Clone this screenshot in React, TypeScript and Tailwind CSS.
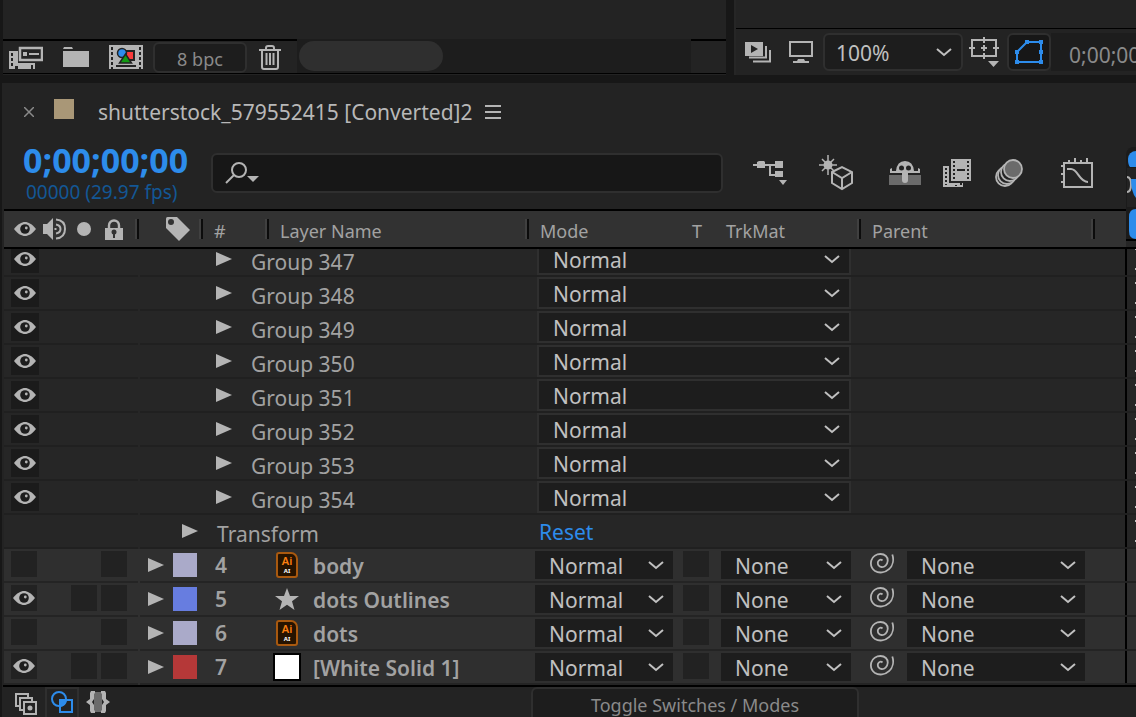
import type { ReactNode } from "react";
import clsx from "clsx";

type Layer = {
  id: number;
  name: string;
  color: string;
  kind: "ai" | "shape" | "solid";
  visible: boolean;
  solo: boolean;
};

const groups = [347, 348, 349, 350, 351, 352, 353, 354];

const layers: Layer[] = [
  { id: 4, name: "body", color: "bg-[#aaaac9]", kind: "ai", visible: false, solo: false },
  { id: 5, name: "dots Outlines", color: "bg-[#677de0]", kind: "shape", visible: true, solo: true },
  { id: 6, name: "dots", color: "bg-[#aaaac9]", kind: "ai", visible: false, solo: false },
  { id: 7, name: "[White Solid 1]", color: "bg-[#b53838]", kind: "solid", visible: true, solo: true },
];

function EyeIcon() {
  return (
    <svg width="22" height="14" viewBox="0 0 22 14" fill="none">
      <path d="M0 7C4 2 7.500 0 11 0s7 2 11 7c-4 5-7.500 7-11 7S4 12 0 7z" fill="#b4b4b4" />
      <circle cx="11" cy="7" r="4.800" fill="#1d1d1d" />
      <circle cx="12.300" cy="6" r="1.400" fill="#b4b4b4" />
    </svg>
  );
}

function SpeakerIcon() {
  return (
    <svg width="24" height="22" viewBox="0 0 24 22" fill="none" stroke="#b4b4b4" strokeWidth="2">
      <path d="M0 6h4l6-6v22l-6-6H0z" fill="#b4b4b4" stroke="none" />
      <path d="M13 6.500c3 .5 4.500 2 4.500 4.500s-1.500 4-4.500 4.500M13 1.500c6 .5 9 4 9 9.500s-3 9-9 9.500M12.500 10v2" />
    </svg>
  );
}

function LockIcon() {
  return (
    <svg width="18" height="21" viewBox="0 0 18 21" fill="none">
      <path d="M4 10V6.500a5 5 0 0 1 10 0V10" stroke="#b4b4b4" strokeWidth="2.400" />
      <path d="M0 9h18v12H0z" fill="#b4b4b4" />
      <circle cx="9" cy="13" r="2.500" fill="#323232" />
      <path d="M8 14h2v5H8z" fill="#323232" />
    </svg>
  );
}

function TagIcon() {
  return (
    <svg width="24" height="24" viewBox="0 0 24 24">
      <path d="M0 1.500Q0 0 1.500 0H11l13 13L13 24 0 11z" fill="#b4b4b4" />
      <circle cx="5" cy="5" r="3" fill="#323232" />
    </svg>
  );
}

function Triangle() {
  return (
    <svg className="shrink-0" width="16" height="14" viewBox="0 0 16 14">
      <path d="M0 0l16 7-16 7z" fill="#b4b4b4" />
    </svg>
  );
}

function Chevron() {
  return (
    <svg width="16" height="9" viewBox="0 0 16 9" fill="none" stroke="#c0c0c0" strokeWidth="2">
      <path d="M1 1l7 6 7-6" />
    </svg>
  );
}

function Spiral() {
  return (
    <svg width="24" height="21" viewBox="0 0 24 21" fill="none" stroke="#b4b4b4" strokeWidth="1.800">
      <path d="M22.300 1.500C24 6.500 23 12.500 19 16.200S9 20.500 5 18C1.500 15.500.3 11.500 1.300 7.500 2.500 3.500 6.500 1 10.500 1 15 1 18 4 17.700 8c-.3 3.800-3.200 6.300-6.200 6-2.700-.3-4.200-2.800-3.500-5.300C8.700 6.700 11 6 12.500 7.500" />
    </svg>
  );
}

function AiIcon() {
  return (
    <div className="flex h-[26px] w-[22px] flex-col items-center rounded-[3px] rounded-tr-[7px] border-2 border-[#a9590f] bg-[#261300]">
      <span className="text-[11px] leading-[14px] font-semibold text-[#f97f10]">Ai</span>
      <span className="text-[6px] leading-[7px] font-bold text-white">AI</span>
    </div>
  );
}

function LayerKindIcon({ kind }: { kind: Layer["kind"] }) {
  if (kind === "ai") return <AiIcon />;
  if (kind === "solid") return <div className="size-7 border-2 border-black bg-white" />;
  return (
    <svg width="24" height="22" viewBox="0 0 24 22">
      <path d="M12 0l3 8h9l-7 5.200L19.500 22 12 16.800 4.500 22 7 13.200 0 8h9z" fill="#b4b4b4" />
    </svg>
  );
}

function Dropdown({ label, value, className }: { label: string; value: string; className: string }) {
  return (
    <div className={clsx("relative bg-[#1d1d1d]", className)}>
      <select
        aria-label={label}
        className="h-full w-full appearance-none bg-transparent pt-px pl-[14px] text-[21px] leading-7 text-[#c0c0c0] outline-none"
      >
        <option>{value}</option>
      </select>
      <span className="pointer-events-none absolute inset-y-0 right-[9px] flex items-center">
        <Chevron />
      </span>
    </div>
  );
}

function Switch({ label, children }: { label: string; children?: ReactNode }) {
  return (
    <button type="button" aria-label={label} className="flex size-[26px] items-center justify-center bg-[#222222]">
      {children}
    </button>
  );
}

function HeadText({ children }: { children: ReactNode }) {
  return <span className="pt-1 whitespace-nowrap">{children}</span>;
}

function Divider() {
  return <span className="ml-auto h-5 w-1 shrink-0 border-r-2 border-l-2 border-r-[#0c0c0c] border-l-[#404040]" />;
}

function StripCell({ marks }: { marks?: boolean }) {
  return (
    <td className="w-[11px] border-b-2 border-[#202020]">
      <div className="flex h-8 flex-col items-end justify-between border-l-2 border-black py-[5px]">
        {marks && <i className="h-[2px] w-px bg-[#c0c0c0]" />}
        {marks && <i className="h-[2px] w-px bg-[#c0c0c0]" />}
      </div>
    </td>
  );
}

function GroupRow({ id }: { id: number }) {
  return (
    <tr className="flex h-[34px] shrink-0 bg-[#262626]">
      <td className="mr-[2px] flex w-[134px] border-b-2 border-[#202020] pt-[2px] pl-[7px]">
        <button type="button" aria-label={`Toggle Group ${id}`} className="flex size-7 items-center justify-center bg-[#1b1b1b]">
          <EyeIcon />
        </button>
      </td>
      <td className="flex min-w-0 flex-1 items-center gap-[19px] border-b-2 border-[#202020] pl-[76px]">
        <Triangle />
        <span className="pt-[6px] text-[21px] leading-7 text-[#a2a2a2]">Group {id}</span>
      </td>
      <td className="w-[332px] border-b-2 border-[#202020] pl-2">
        <Dropdown label={`Mode of Group ${id}`} value="Normal" className="h-8 w-[314px] border-2 border-[#2f2f2f]" />
      </td>
      <td className="w-[264px] border-b-2 border-[#202020]" />
      <StripCell marks />
    </tr>
  );
}

function LayerRow({ layer }: { layer: Layer }) {
  return (
    <tr className="flex h-[34px] shrink-0 bg-[#2f2f2f]">
      <td className="mr-[2px] flex w-[134px] border-b-2 border-[#242424] pt-[2px] pl-[7px]">
        <Switch label="Visible">{layer.visible && <EyeIcon />}</Switch>
        <span className="ml-[34px] flex w-[26px]">{layer.solo && <Switch label="Solo" />}</span>
        <span className="ml-1">
          <Switch label="Lock" />
        </span>
      </td>
      <td className="flex min-w-0 flex-1 items-center border-b-2 border-[#242424] pl-2 text-[21px] leading-7 font-semibold text-[#a2a2a2]">
        <Triangle />
        <span className={clsx("ml-[9px] size-6 shrink-0", layer.color)} />
        <span className="w-[52px] pl-[18px]">{layer.id}</span>
        <span className="ml-[22px] flex w-[32px] justify-center">
          <LayerKindIcon kind={layer.kind} />
        </span>
        <span className="ml-[10px] pt-[2px] whitespace-nowrap">{layer.name}</span>
      </td>
      <td className="w-[152px] border-b-2 border-[#242424] pt-[2px] pl-[6px]">
        <Dropdown label="Mode" value="Normal" className="h-7 w-[138px]" />
      </td>
      <td className="w-[34px] border-b-2 border-[#242424] pt-[2px] pl-[2px]">
        <Switch label="Preserve transparency" />
      </td>
      <td className="w-[146px] border-b-2 border-[#242424] pt-[2px] pl-[6px]">
        <Dropdown label="Track matte" value="None" className="h-7 w-[130px]" />
      </td>
      <td className="flex w-[264px] gap-[13px] border-b-2 border-[#242424] pt-[2px] pl-[9px]">
        <span className="pt-[2px]">
          <Spiral />
        </span>
        <Dropdown label="Parent" value="None" className="h-7 w-[178px]" />
      </td>
      <StripCell />
    </tr>
  );
}

function ProjectPanel() {
  return (
    <section className="flex min-w-0 flex-[723] flex-col bg-[#232323]">
      <div className="flex-1" />
      <div className="mb-px flex h-[35px] border-b border-black">
        <div className="flex w-[294px] items-center border-t-2 border-black pl-[6px]">
          <button type="button" aria-label="Interpret footage">
            <svg width="34" height="24" viewBox="0 0 34 24" fill="none">
              <path d="M0 6h9v12h17v6H0z" fill="#b4b4b4" />
              <path d="M2 8h2v3H2zM2 13h2v3H2zM2 18h2v3H2zM6 21h3v3H6zM22 20h2v4h-2z" fill="#232323" />
              <path d="M11 3h22v12H11z" fill="#232323" stroke="#b4b4b4" strokeWidth="2.500" />
              <path d="M14 7h4v4h-4zM20 8h10v2H20z" fill="#b4b4b4" />
            </svg>
          </button>
          <button type="button" aria-label="New folder" className="ml-5">
            <svg width="26" height="20" viewBox="0 0 26 20" fill="#b4b4b4">
              <path d="M0 2l1-2h8l1 2zM0 4h26v16H0z" />
            </svg>
          </button>
          <button type="button" aria-label="New composition" className="ml-5">
            <svg width="34" height="24" viewBox="0 0 34 24">
              <path d="M0 0h34v24H0z" fill="#b4b4b4" />
              <path d="M2 2h2v3H2zM2 7h2v3H2zM2 12h2v3H2zM2 17h2v3H2zM30 2h2v3h-2zM30 7h2v3h-2zM30 12h2v3h-2zM30 17h2v3h-2zM7 20h20v2H7zM2 22h2v2H2zM30 22h2v2h-2z" fill="#232323" />
              <path d="M17 6h8v9h-8z" fill="#f93a3a" stroke="#232323" strokeWidth="2" />
              <circle cx="13" cy="8" r="4.500" fill="#2d8ceb" stroke="#232323" strokeWidth="1.500" />
              <path d="M16.500 9l6 9h-12z" fill="#139b13" stroke="#232323" strokeWidth="1.500" />
            </svg>
          </button>
          <button
            type="button"
            className="ml-[10px] flex h-[31px] w-[94px] items-center justify-center rounded-md border-2 border-[#2f2f2f] bg-[#1d1d1d] pt-1 text-[18px] leading-6 text-[#8a8a8a]"
          >
            8 bpc
          </button>
          <button type="button" aria-label="Delete" className="ml-3">
            <svg width="22" height="25" viewBox="0 0 22 25" fill="none" stroke="#b4b4b4" strokeWidth="2">
              <path d="M0 5h22M7 5V3q0-2 2-2h4q2 0 2 2v2M3 5v17q0 2 2 2h12q2 0 2-2V5M7.500 8v12M11 8v12M14.500 8v12" />
            </svg>
          </button>
        </div>
        <div className="flex-1 bg-[#1d1d1d] pt-[2px] pl-[2px]">
          <div className="h-[30px] w-36 rounded-full bg-[#2f2f2f]" />
        </div>
        <div className="w-[35px] border-t-2 border-black" />
      </div>
    </section>
  );
}

function ViewerPanel() {
  return (
    <section className="flex min-w-0 flex-[400] flex-col overflow-hidden border-l-2 border-[#262626] bg-[#232323]">
      <div className="flex-1" />
      <div className="flex h-[47px] items-center border-t border-black pl-[9px]">
        <button type="button" aria-label="Preview">
          <svg width="26" height="21" viewBox="0 0 26 21">
            <path d="M0 0h18v14H0z" fill="#b4b4b4" />
            <path d="M6 3l7 4-7 4z" fill="#232323" />
            <path d="M4 15.500h17V4M8 19.500h17V8" fill="none" stroke="#b4b4b4" strokeWidth="2" />
          </svg>
        </button>
        <button type="button" aria-label="Display" className="ml-[18px]">
          <svg width="24" height="22" viewBox="0 0 24 22" fill="none">
            <path d="M1 1h22v14H1z" stroke="#b4b4b4" strokeWidth="2" />
            <path d="M9 18h6l1 2h4v2H4v-2h4z" fill="#b4b4b4" />
          </svg>
        </button>
        <div className="relative ml-[10px] h-[38px] w-[140px] rounded-md border-2 border-[#2f2f2f] bg-[#1d1d1d]">
          <select
            aria-label="Magnification"
            className="h-full w-full appearance-none bg-transparent pt-[2px] pl-[11px] text-[21px] leading-7 text-[#c0c0c0] outline-none"
          >
            <option>100%</option>
          </select>
          <span className="pointer-events-none absolute inset-y-0 right-[9px] flex items-center">
            <Chevron />
          </span>
        </div>
        <button type="button" aria-label="Grid and guides" className="ml-[6px]">
          <svg width="30" height="30" viewBox="0 0 30 30" fill="none" stroke="#b4b4b4" strokeWidth="2">
            <path d="M3 3h24v16H3zM15 0v6M15 16v6M0 11h6M24 11h6M15 8v6M12 11h6" />
            <path d="M19 24h11l-5.500 6z" fill="#b4b4b4" stroke="none" />
          </svg>
        </button>
        <button
          type="button"
          aria-label="Mask visibility"
          className="ml-2 flex h-[38px] w-[44px] shrink-0 items-center justify-center rounded-md border-2 border-[#2f2f2f] bg-[#171717]"
        >
          <svg width="28" height="24" viewBox="0 0 28 24">
            <path d="M2 22h24V2H12L2 12z" fill="none" stroke="#2d8ceb" strokeWidth="2" />
            <path d="M0 20h4v4H0zM24 20h4v4h-4zM24 0h4v4h-4zM10 0h4v4h-4zM0 10h4v4H0zM24 10h4v4h-4z" fill="#2d8ceb" />
          </svg>
        </button>
        <div className="h-[38px] flex-1 overflow-hidden bg-[#1d1d1d] pt-1 pl-[18px] text-[21px] leading-9 whitespace-nowrap text-[#8a8a8a]">
          0;00;00;00
        </div>
      </div>
    </section>
  );
}

function TimelineTools() {
  return (
    <div className="flex shrink-0 items-center pr-[43px] pl-[30px]">
      <button type="button" aria-label="Flowchart">
        <svg width="34" height="25" viewBox="0 0 34 25" fill="#b4b4b4">
          <path d="M0 3h30v2H0zM16 4h2v11h-2zM17 13h6v2h-6z" />
          <path d="M4 1l2-1h5l1 1v6H4zM22 0h8v7h-8zM22 10h8v6h-8zM26 19h8l-4 5z" />
        </svg>
      </button>
      <button type="button" aria-label="Draft 3D" className="ml-8">
        <svg width="35" height="36" viewBox="0 0 35 36" fill="none" stroke="#b4b4b4" strokeWidth="2">
          <path d="M13 17l10-5 10 5v11l-10 6-10-6zM13 17l10 6 10-6M23 23v11" />
          <path d="M9 0v20M0 10h18M3 4l12 12M3 16L15 4" strokeWidth="1.500" />
          <circle cx="9" cy="10" r="4.500" fill="#b4b4b4" stroke="none" />
        </svg>
      </button>
      <button type="button" aria-label="Hide shy layers" className="ml-[35px]">
        <svg width="32" height="26" viewBox="0 0 32 26">
          <path d="M0 15h32v10H0z" fill="#6b6b6b" />
          <path d="M3 8v3h4Q8 1 16 1t9 10h4V8l2 1v4H1V9z" fill="#b4b4b4" />
          <path d="M13 11h6v9q0 3-3 3t-3-3z" fill="#b4b4b4" />
          <circle cx="12.500" cy="8" r="2.500" fill="#232323" />
          <circle cx="19.500" cy="8" r="2.500" fill="#232323" />
        </svg>
      </button>
      <button type="button" aria-label="Frame blending" className="ml-[22px]">
        <svg width="28" height="28" viewBox="0 0 28 28">
          <path d="M0 7h6v17h14v4H0z" fill="#b4b4b4" />
          <path d="M8 0h20v22H8z" fill="#b4b4b4" />
          <g stroke="#232323" strokeWidth="2" strokeDasharray="2 2">
            <path d="M11 2v20M25 2v20M3 9v17" />
          </g>
          <path d="M14 10h8v2h-8zM17 24h2v2h-2zM12 26h2v1h-2z" fill="#232323" />
        </svg>
      </button>
      <button type="button" aria-label="Motion blur" className="ml-6">
        <svg width="28" height="28" viewBox="0 0 28 28" stroke="#b4b4b4" strokeWidth="1.800">
          <circle cx="10" cy="18" r="9" fill="#232323" />
          <circle cx="12" cy="16" r="9" fill="#232323" />
          <circle cx="15" cy="13" r="9" fill="#232323" />
          <circle cx="18" cy="10" r="9" fill="#6b6b6b" />
        </svg>
      </button>
      <button type="button" aria-label="Graph editor" className="ml-[38px]">
        <svg width="32" height="31" viewBox="0 0 32 31" fill="none" stroke="#b4b4b4" strokeWidth="2">
          <path d="M3 5h28v24H3zM8 2v3M14 0v5M20 2v3M26 0v5M0 8h3M0 16h3M0 24h3" />
          <path d="M6 11h4c7 0 8 13 17 13" />
        </svg>
      </button>
    </div>
  );
}

function Navigator() {
  return (
    <svg className="absolute top-[64px] right-0" width="10" height="102" viewBox="0 0 10 102">
      <path d="M0 8q0-6 6-8h4v92H0z" fill="#1b1b1b" />
      <path d="M1 21h9v39H1z" fill="#232323" />
      <path d="M0 92h10v2H0z" fill="#000" />
      <path d="M0 94h10v6H0z" fill="#262626" />
      <path d="M10 4a8 8 0 0 0-8 8q0 6 2 8h6z" fill="#2d8ceb" />
      <path d="M1 30q4 0 4 7.500T1 45" fill="none" stroke="#b0b0b0" strokeWidth="2" />
      <path d="M5 32h5v19Q5 45 5 32z" fill="#2d8ceb" />
      <path d="M10 62q-7 0-7 8v14q0 8 7 8z" fill="#2d8ceb" />
    </svg>
  );
}

function LayerTable() {
  return (
    <table className="flex min-h-0 flex-1 flex-col pl-1">
      <thead className="block shrink-0">
        <tr className="flex h-10 items-stretch border-y-2 border-black bg-[#323232] text-left text-[18px] leading-6 text-[#a2a2a2]">
          <th className="flex w-[136px] items-center pr-px pl-[10px] font-normal">
            <EyeIcon />
            <span className="ml-[7px]">
              <SpeakerIcon />
            </span>
            <span className="ml-[10px] size-[14px] rounded-full bg-[#b4b4b4]" />
            <span className="ml-[14px]">
              <LockIcon />
            </span>
            <Divider />
          </th>
          <th className="flex w-[63px] items-center pl-[26px] font-normal">
            <TagIcon />
            <Divider />
          </th>
          <th className="flex w-[66px] items-center pl-[11px] font-normal">
            <HeadText>#</HeadText>
            <Divider />
          </th>
          <th className="flex min-w-0 flex-1 items-center pl-[11px] font-normal">
            <HeadText>Layer Name</HeadText>
            <Divider />
          </th>
          <th className="flex w-[152px] items-center pl-[11px] font-normal">
            <HeadText>Mode</HeadText>
          </th>
          <th className="flex w-[34px] items-center pl-[11px] font-normal">
            <HeadText>T</HeadText>
          </th>
          <th className="flex w-[146px] items-center pl-[11px] font-normal">
            <HeadText>TrkMat</HeadText>
            <Divider />
          </th>
          <th className="flex w-[234px] items-center pl-[11px] font-normal">
            <HeadText>Parent</HeadText>
            <Divider />
          </th>
          <th className="w-[41px]" />
        </tr>
      </thead>
      <tbody className="flex min-h-0 flex-1 flex-col justify-end overflow-hidden">
        {groups.map((id) => (
          <GroupRow key={id} id={id} />
        ))}
        <tr className="flex h-[34px] shrink-0 bg-[#262626]">
          <td className="mr-[2px] w-[134px] border-b-2 border-[#202020]" />
          <td className="flex min-w-0 flex-1 items-center gap-[19px] border-b-2 border-[#202020] pl-[42px]">
            <Triangle />
            <span className="pt-[6px] text-[21px] leading-7 text-[#a2a2a2]">Transform</span>
          </td>
          <td className="w-[332px] border-b-2 border-[#202020] pl-[10px]">
            <button type="button" className="pt-px text-[21px] leading-8 text-[#2d8ceb]">
              Reset
            </button>
          </td>
          <td className="w-[264px] border-b-2 border-[#202020]" />
          <StripCell marks />
        </tr>
        {layers.map((layer) => (
          <LayerRow key={layer.id} layer={layer} />
        ))}
      </tbody>
    </table>
  );
}

function Timeline() {
  return (
    <section className="relative ml-[2px] flex min-h-0 flex-1 flex-col bg-[#232323]">
      <div className="flex h-[58px] items-center pl-[22px]">
        <button type="button" aria-label="Close tab">
          <svg width="10" height="10" viewBox="0 0 10 10" stroke="#8a8a8a" strokeWidth="1.500">
            <path d="M0 0l10 10M10 0L0 10" />
          </svg>
        </button>
        <span className="mb-[6px] ml-5 size-5 bg-[#a99777]" />
        <h1 className="ml-6 text-[21px] leading-7 text-[#b8b8b8]">shutterstock_579552415 [Converted]2</h1>
        <button type="button" aria-label="Panel menu" className="ml-3 flex flex-col gap-1">
          <i className="h-[2px] w-4 bg-[#b4b4b4]" />
          <i className="h-[2px] w-4 bg-[#b4b4b4]" />
          <i className="h-[2px] w-4 bg-[#b4b4b4]" />
        </button>
      </div>
      <div className="flex h-[68px] items-center pb-[4px]">
        <div className="w-[209px] shrink-0 pl-[21px]">
          <div className="text-[34px] leading-9 font-bold text-[#2d8ceb]">0;00;00;00</div>
          <div className="pt-[2px] pl-[3px] text-[19px] leading-6 text-[#135795]">00000 (29.97 fps)</div>
        </div>
        <label className="flex h-10 min-w-0 flex-1 items-center rounded-md border-2 border-[#2f2f2f] bg-[#171717] pl-3">
          <svg width="34" height="24" viewBox="0 0 34 24" fill="none" stroke="#b4b4b4" strokeWidth="2">
            <circle cx="14" cy="9" r="7" />
            <path d="M9 14l-8 8" />
            <path d="M22 15h12l-6 6z" fill="#b4b4b4" stroke="none" />
          </svg>
          <input aria-label="Search layers" className="min-w-0 flex-1 bg-transparent pl-2 text-[21px] text-[#c0c0c0] outline-none" />
        </label>
        <TimelineTools />
      </div>
      <div className="-ml-[2px] flex min-h-0 flex-1 flex-col">
        <LayerTable />
      </div>
      <footer className="ml-px flex h-8 shrink-0 items-start overflow-hidden border-t-2 border-black">
        <div className="flex min-w-0 flex-1 items-start">
          <button type="button" aria-label="Layer switches" className="pt-[6px] pl-3">
            <svg width="22" height="22" viewBox="0 0 22 22" fill="#232323" stroke="#b4b4b4" strokeWidth="2">
              <path d="M1 1h12v12H1z" />
              <path d="M5 5h12v12H5z" />
              <path d="M9 9h12v12H9z" />
              <circle cx="15" cy="15" r="1.500" fill="#b4b4b4" />
            </svg>
          </button>
          <button type="button" aria-label="Transfer controls" className="ml-2 flex h-[30px] w-[34px] justify-center border-2 border-b-0 border-[#2f2f2f] pt-[2px]">
            <svg width="22" height="22" viewBox="0 0 22 22" fill="none" stroke="#2d8ceb" strokeWidth="2">
              <path d="M9 9h6a7 7 0 0 1-6 6z" fill="#2d8ceb" />
              <circle cx="8" cy="8" r="7" />
              <path d="M9 9h12v12H9z" />
            </svg>
          </button>
          <button type="button" aria-label="In and out" className="ml-[7px] flex pt-1">
            <svg width="24" height="22" viewBox="0 0 24 22">
              <path d="M8 1h8v20H8z" fill="#6b6b6b" />
              <path d="M9 0v2L8 3v5l-2 3 2 3v5l1 1v2H5l-1-2v-6l-4-3 4-3V2l1-2zM15 0v2l1 1v5l2 3-2 3v5l-1 1v2h4l1-2v-6l4-3-4-3V2l-1-2z" fill="#b4b4b4" />
            </svg>
          </button>
        </div>
        <button
          type="button"
          className="mr-[277px] h-8 w-[328px] rounded-t-md border-2 border-b-0 border-[#2f2f2f] bg-[#1d1d1d] pt-[2px] text-[18px] leading-6 text-[#8a8a8a]"
        >
          Toggle Switches / Modes
        </button>
      </footer>
      <Navigator />
    </section>
  );
}

export default function App() {
  return (
    <main className="flex h-screen flex-col overflow-hidden bg-[#171717] font-['Noto_Sans',sans-serif]">
      <div className="mb-2 flex h-[75px] shrink-0 gap-2 pl-[3px]">
        <ProjectPanel />
        <ViewerPanel />
      </div>
      <Timeline />
    </main>
  );
}
